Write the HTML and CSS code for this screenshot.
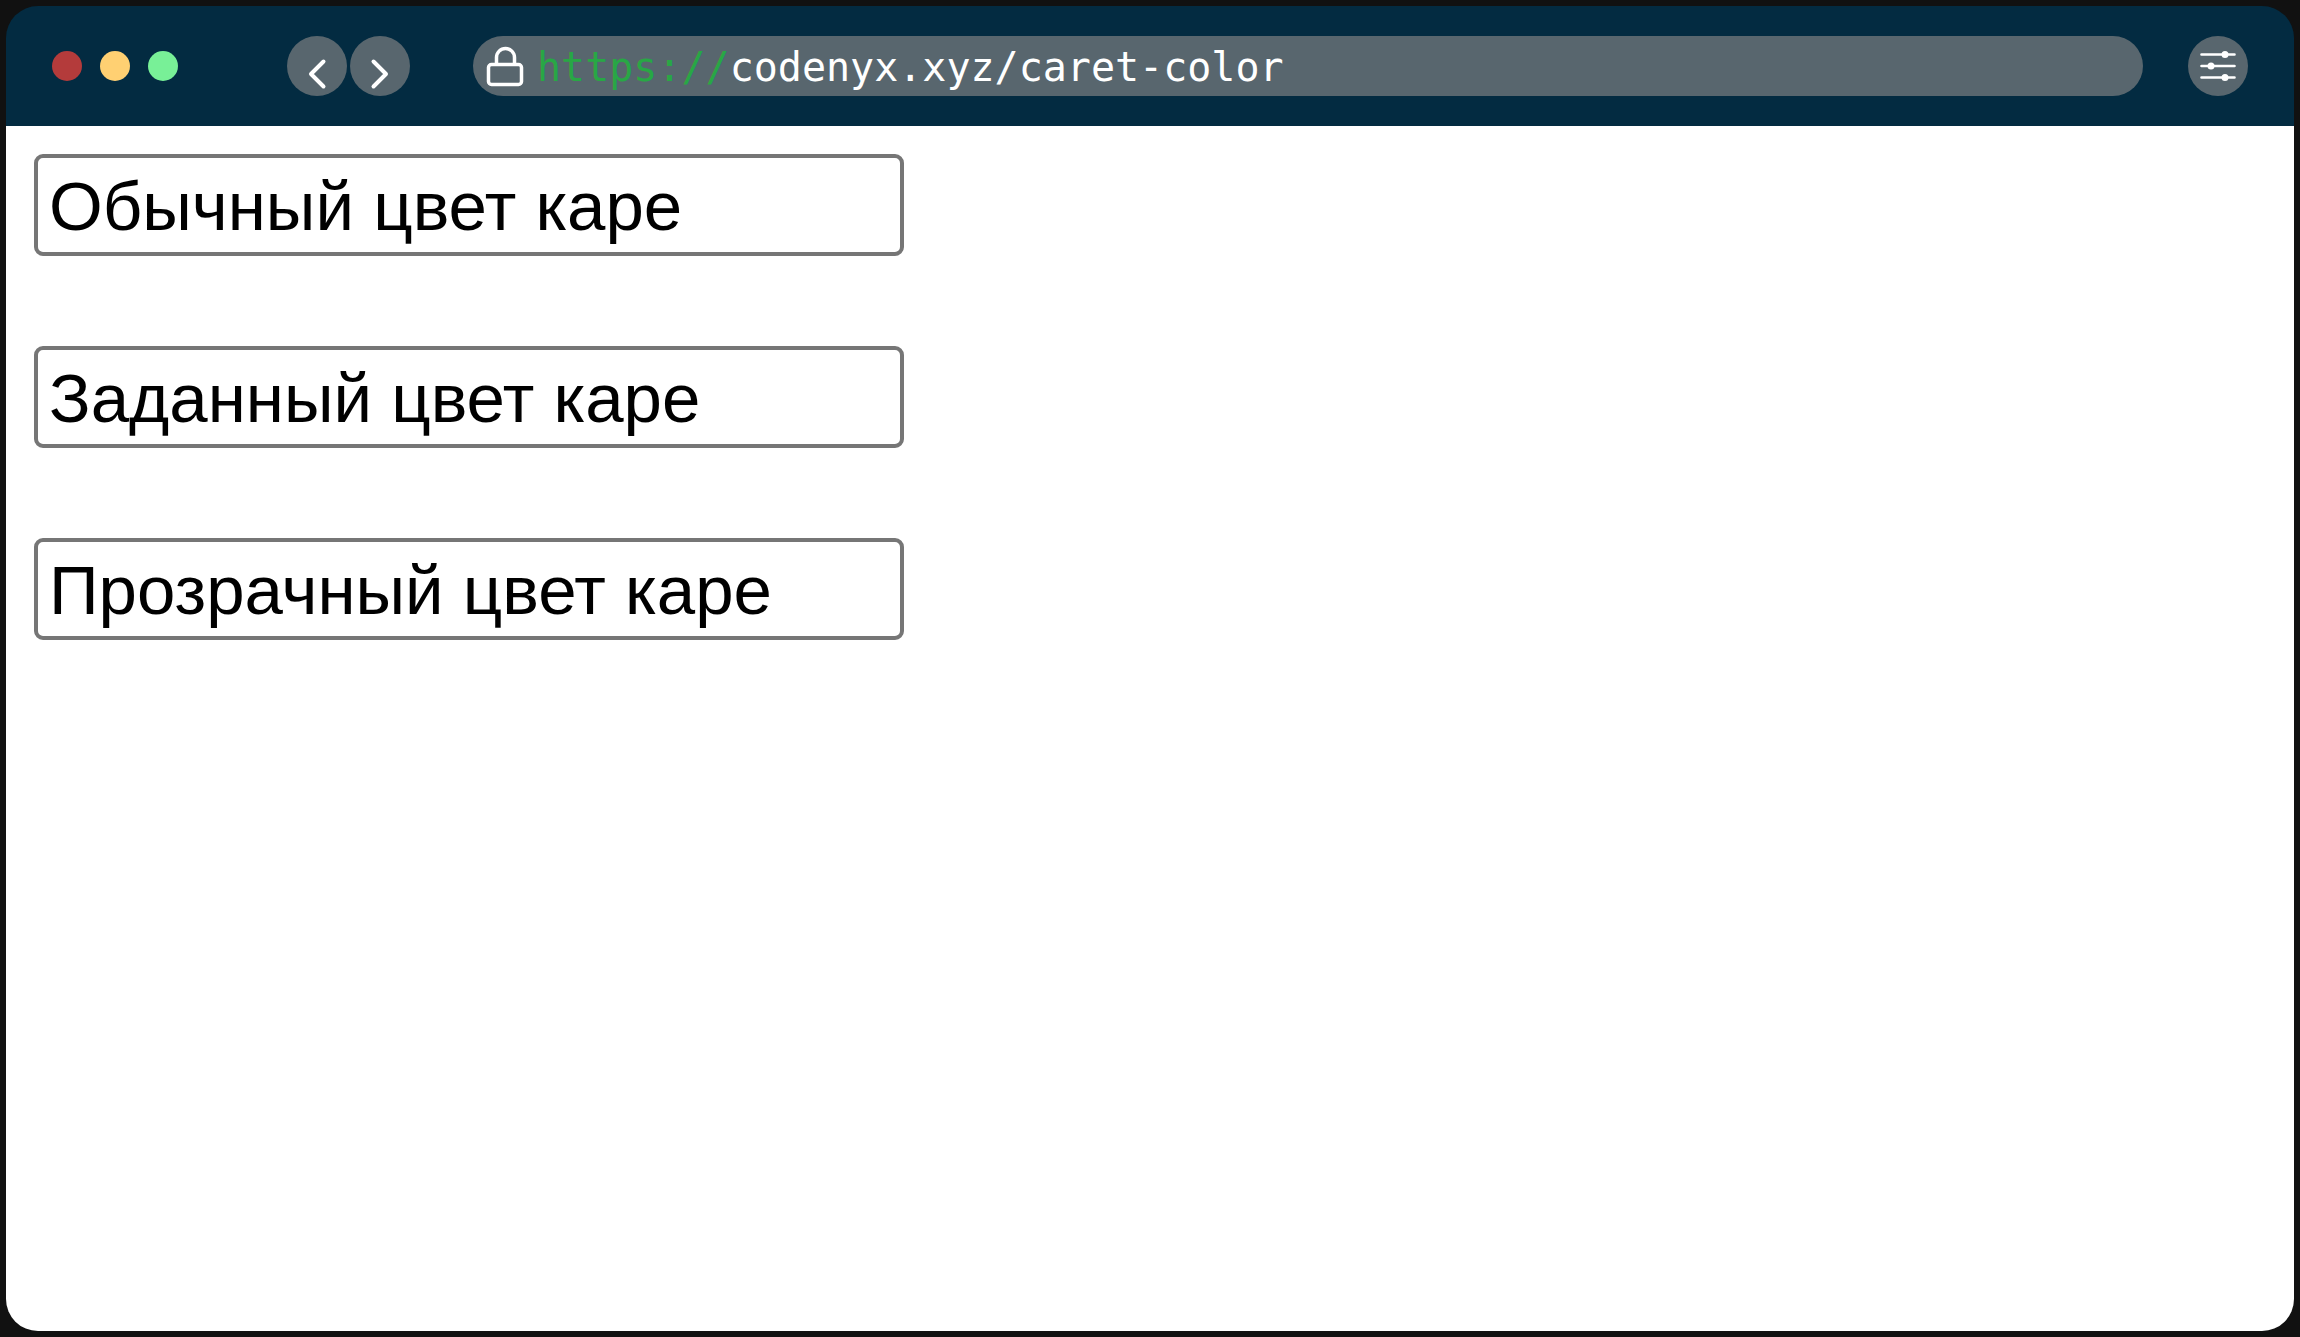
FILE: index.html
```html
<!DOCTYPE html>
<html lang="ru">
<head>
  <meta charset="utf-8">
  <meta name="viewport" content="width=device-width, initial-scale=1">
  <title>caret-color</title>
  <link rel="stylesheet" href="styles.css">
</head>
<body>
  <div class="window">
    <header class="toolbar">
      <div class="lights">
        <span class="light light-close"></span>
        <span class="light light-minimize"></span>
        <span class="light light-zoom"></span>
      </div>
      <nav class="history">
        <button class="round-button" type="button" aria-label="Назад">
          <svg class="icon" viewBox="0 0 60 60"><path d="m36.500 25.500-12.500 12.500 12.500 12.500" stroke-width="4"/></svg>
        </button>
        <button class="round-button" type="button" aria-label="Вперёд">
          <svg class="icon" viewBox="0 0 60 60"><path d="m23.500 25.500 12.500 12.500-12.500 12.500" stroke-width="4"/></svg>
        </button>
      </nav>
      <div class="address">
        <svg class="lock" viewBox="0 0 40 44"><rect x="3.500" y="20.500" width="33" height="20" rx="3"/><path d="M11.500 20v-6.500a9 9 0 0 1 18 0v6.500"/></svg>
        <a class="url" href="https://codenyx.xyz/caret-color"><span class="scheme">https://</span>codenyx.xyz/caret-color</a>
      </div>
      <button class="round-button" type="button" aria-label="Настройки">
        <svg class="icon" viewBox="0 0 60 60">
          <path d="M13.500 18.500h33M13.500 30h33M13.500 41.500h33" stroke-width="2.600"/>
          <g class="knobs"><circle cx="37" cy="18.500" r="3.500"/><circle cx="23" cy="30" r="3.500"/><circle cx="37" cy="41.500" r="3.500"/></g>
        </svg>
      </button>
    </header>
    <main class="page">
      <input class="field" type="text" value="Обычный цвет каре" aria-label="Обычный цвет каре">
      <input class="field field-colored" type="text" value="Заданный цвет каре" aria-label="Заданный цвет каре">
      <input class="field field-transparent" type="text" value="Прозрачный цвет каре" aria-label="Прозрачный цвет каре">
    </main>
  </div>
</body>
</html>
```
FILE: styles.css
```css
* {
  box-sizing: border-box;
}

body {
  margin: 0;
  padding: 6px;
  background: #111;
}

.window {
  display: flex;
  flex-direction: column;
  min-height: calc(100vh - 12px);
}

.toolbar {
  display: flex;
  align-items: center;
  padding: 30px 46px;
  border-radius: 32px 32px 0 0;
  background: #032b41;
}

.lights {
  display: flex;
  gap: 18px;
}

.light {
  width: 30px;
  height: 30px;
  border-radius: 50%;
}

.light-close {
  background: #b43b3b;
}

.light-minimize {
  background: #ffd072;
}

.light-zoom {
  background: #78f097;
}

.history {
  display: flex;
  gap: 3px;
  margin-left: 109px;
}

.round-button {
  flex: none;
  width: 60px;
  height: 60px;
  padding: 0;
  border: 0;
  border-radius: 50%;
  background: #58666e;
}

.icon,
.lock {
  display: block;
  fill: none;
  stroke: #fff;
  stroke-linecap: round;
  stroke-linejoin: round;
}

.icon {
  width: 60px;
  height: 60px;
}

.knobs {
  fill: #fff;
  stroke: none;
}

.lock {
  flex: none;
  width: 40px;
  height: 44px;
  stroke-width: 3.5;
}

.address {
  display: flex;
  flex: 1;
  align-items: center;
  gap: 12px;
  min-width: 0;
  height: 60px;
  margin: 0 45px 0 63px;
  padding: 0 12px;
  border-radius: 30px;
  background: #58666e;
}

.url {
  overflow: hidden;
  padding-top: 2px;
  color: #fff;
  font: 40px/58px "DejaVu Sans Mono", monospace;
  text-decoration: none;
  white-space: nowrap;
}

.scheme {
  color: #28a745;
}

.page {
  display: flex;
  flex: 1;
  flex-direction: column;
  gap: 90px;
  padding: 28px;
  border-radius: 0 0 32px 32px;
  background: #fff;
}

.field {
  width: 100%;
  max-width: 870px;
  height: 102px;
  padding: 2px 11px 0;
  border: 4px solid #767676;
  border-radius: 9px;
  background: #fff;
  color: #000;
  font: 69px "Liberation Sans", Arial, sans-serif;
}

.field-colored {
  caret-color: #f00;
}

.field-transparent {
  caret-color: transparent;
}
```
